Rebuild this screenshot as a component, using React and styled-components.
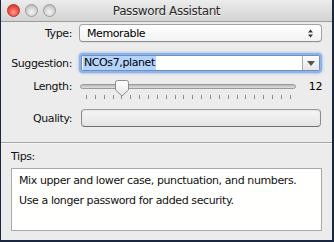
import React from "react";
import styled, { createGlobalStyle } from "styled-components";

const GlobalStyle = createGlobalStyle`
  html, body {
    margin: 0;
    padding: 0;
    background: #1b2640;
  }
  body {
    font-family: "DejaVu Sans", "Liberation Sans", sans-serif;
    font-size: 11px;
    letter-spacing: -0.4px;
    color: #000;
  }
`;

const Window = styled.div`
  width: 331px;
  height: 240px;
  margin-left: 1px;
  background: #ececec;
  display: flex;
  flex-direction: column;
  overflow: hidden;
`;

const TitleBar = styled.div`
  height: 21px;
  flex-shrink: 0;
  display: grid;
  grid-template-columns: 1fr auto 1fr;
  align-items: center;
  background: linear-gradient(#ececec, #d3d3d3);
  border-bottom: 1px solid #9c9c9c;
  border-radius: 4px 4px 0 0;
`;

const Lights = styled.div`
  display: flex;
  gap: 5px;
  padding-left: 6px;
`;

const Light = styled.span`
  width: 13px;
  height: 13px;
  box-sizing: border-box;
  border-radius: 50%;
  border: 1px solid ${(p) => (p.red ? "#a8352c" : "#9b9b9b")};
  background: ${(p) =>
    p.red
      ? "radial-gradient(circle at 50% 65%, #ffa093 0%, #f4594c 45%, #c52c22 100%)"
      : "radial-gradient(circle at 50% 65%, #f4f4f4 0%, #d6d6d6 50%, #a9a9a9 100%)"};
`;

const Title = styled.div`
  font-size: 12px;
  color: #2b2b2b;
  text-shadow: 0 1px 0 rgba(255, 255, 255, 0.6);
`;

const Form = styled.div`
  display: flex;
  flex-direction: column;
  padding: 2px 10px 0 0;
  height: 118px;
  flex-shrink: 0;
`;

const Row = styled.div`
  display: flex;
  align-items: center;
  gap: 7px;
  height: ${(p) => p.h}px;
  margin-top: ${(p) => p.mt || 0}px;
`;

const Label = styled.div`
  width: 71px;
  flex-shrink: 0;
  text-align: right;
  color: #111;
  align-self: ${(p) => (p.top ? "flex-start" : "center")};
`;

const PopUp = styled.div`
  flex: 1;
  height: 18px;
  box-sizing: border-box;
  border: 1px solid #a2a2a2;
  border-bottom-color: #8e8e8e;
  border-radius: 4px;
  background: linear-gradient(#ffffff, #f2f2f2);
  box-shadow: 0 1px 0 rgba(0, 0, 0, 0.06);
  display: flex;
  align-items: center;
  justify-content: space-between;
  padding: 0 8px 0 7px;
`;

const Combo = styled.div`
  flex: 1;
  height: 14px;
  margin: 2px;
  display: flex;
  border: 1px solid #6f8fbf;
  border-radius: 2px;
  box-shadow: 0 0 0 2px #8db3e8, 0 0 2px 3px rgba(120, 160, 225, 0.45);
  background: #fff;
`;

const ComboText = styled.div`
  flex: 1;
  display: flex;
  align-items: center;
  padding-left: 1px;
`;

const Selected = styled.span`
  background: #b5d4fd;
  line-height: 14px;
  padding: 0 1px;
`;

const ComboButton = styled.div`
  width: 16px;
  border-left: 1px solid #a9a9a9;
  background: linear-gradient(#fdfdfd, #e6e6e6);
  display: flex;
  align-items: center;
  justify-content: center;
`;

const SliderBox = styled.div`
  flex: 1;
  position: relative;
  height: 18px;
  margin-left: 1px;
`;

const Track = styled.div`
  margin-top: 4px;
  height: 5px;
  box-sizing: border-box;
  border: 1px solid #9a9a9a;
  border-radius: 3px;
  background: linear-gradient(#b9b9b9, #dedede);
`;

const Thumb = styled.svg`
  position: absolute;
  top: 0;
  left: ${(p) => p.x}px;
`;

const Ticks = styled.div`
  display: flex;
  justify-content: space-between;
  padding: 0 5px 0 6px;
  margin-top: 6px;
`;

const Tick = styled.span`
  width: 1px;
  height: 4px;
  background: #8c8c8c;
`;

const Value = styled.div`
  width: 19px;
  text-align: right;
  align-self: flex-start;
`;

const QualityBar = styled.div`
  flex: 1;
  height: 18px;
  box-sizing: border-box;
  margin: 0 1px 0 2px;
  border: 1px solid #8a8a8a;
  border-top-color: #9c9c9c;
  border-bottom-color: #6f6f6f;
  border-radius: 4px;
  background: linear-gradient(#f6f6f6, #ededed 50%, #e4e4e4);
  box-shadow: inset 0 1px 1px rgba(0, 0, 0, 0.08);
`;

const Separator = styled.div`
  border-top: 1px solid #a4a4a4;
  border-bottom: 1px solid #f6f6f6;
`;

const TipsSection = styled.div`
  flex: 1;
  padding: 6px 10px 0 10px;
  display: flex;
  flex-direction: column;
`;

const TipsLabel = styled.div`
  color: #111;
  height: 18px;
`;

const TipsBox = styled.div`
  height: 63px;
  box-sizing: border-box;
  border: 1px solid #a9a9a9;
  background: #fffffd;
  padding: 2px 7px 0;
`;

const Tip = styled.div`
  line-height: 20px;
  color: #111;
  white-space: nowrap;
`;

const UpDown = () => (
  <svg width="5" height="9" viewBox="0 0 5 9">
    <path d="M2.5 0.5 L5 3.5 L0 3.5 Z" fill="#333" />
    <path d="M2.5 8.5 L5 5.5 L0 5.5 Z" fill="#333" />
  </svg>
);

const Down = () => (
  <svg width="8" height="5" viewBox="0 0 8 5">
    <path d="M0 0 L8 0 L4 5 Z" fill="#555" />
  </svg>
);

const ThumbShape = ({ x }) => (
  <Thumb x={x} width="14" height="17" viewBox="0 0 14 17">
    <defs>
      <linearGradient id="tg" x1="0" y1="0" x2="0" y2="1">
        <stop offset="0" stopColor="#ffffff" />
        <stop offset="1" stopColor="#e4e4e4" />
      </linearGradient>
    </defs>
    <path
      d="M2.5 0.5 H11.5 Q13.5 0.5 13.5 2.5 V10 L7 16 L0.5 10 V2.5 Q0.5 0.5 2.5 0.5 Z"
      fill="url(#tg)"
      stroke="#8d8d8d"
    />
  </Thumb>
);

const tips = [
  "Mix upper and lower case, punctuation, and numbers.",
  "Use a longer password for added security.",
];

export default function App() {
  const min = 8;
  const max = 31;
  const length = 12;
  const tickCount = max - min + 1;
  const span = 205;
  const thumbX = 6 + ((length - min) / (max - min)) * span - 7;

  return (
    <>
      <GlobalStyle />
      <Window>
        <TitleBar>
          <Lights>
            <Light red />
            <Light />
            <Light />
          </Lights>
          <Title>Password Assistant</Title>
          <div />
        </TitleBar>

        <Form>
          <Row h={18}>
            <Label>Type:</Label>
            <PopUp>
              <span>Memorable</span>
              <UpDown />
            </PopUp>
          </Row>

          <Row h={20} mt={11}>
            <Label>Suggestion:</Label>
            <Combo>
              <ComboText>
                <Selected>NCOs7,planet</Selected>
              </ComboText>
              <ComboButton>
                <Down />
              </ComboButton>
            </Combo>
          </Row>

          <Row h={18} mt={7}>
            <Label top>Length:</Label>
            <SliderBox>
              <Track />
              <ThumbShape x={thumbX} />
              <Ticks>
                {Array.from({ length: tickCount }).map((_, i) => (
                  <Tick key={i} />
                ))}
              </Ticks>
            </SliderBox>
            <Value>{length}</Value>
          </Row>

          <Row h={18} mt={11}>
            <Label>Quality:</Label>
            <QualityBar />
          </Row>
        </Form>

        <Separator />

        <TipsSection>
          <TipsLabel>Tips:</TipsLabel>
          <TipsBox>
            {tips.map((t) => (
              <Tip key={t}>{t}</Tip>
            ))}
          </TipsBox>
        </TipsSection>
      </Window>
    </>
  );
}
